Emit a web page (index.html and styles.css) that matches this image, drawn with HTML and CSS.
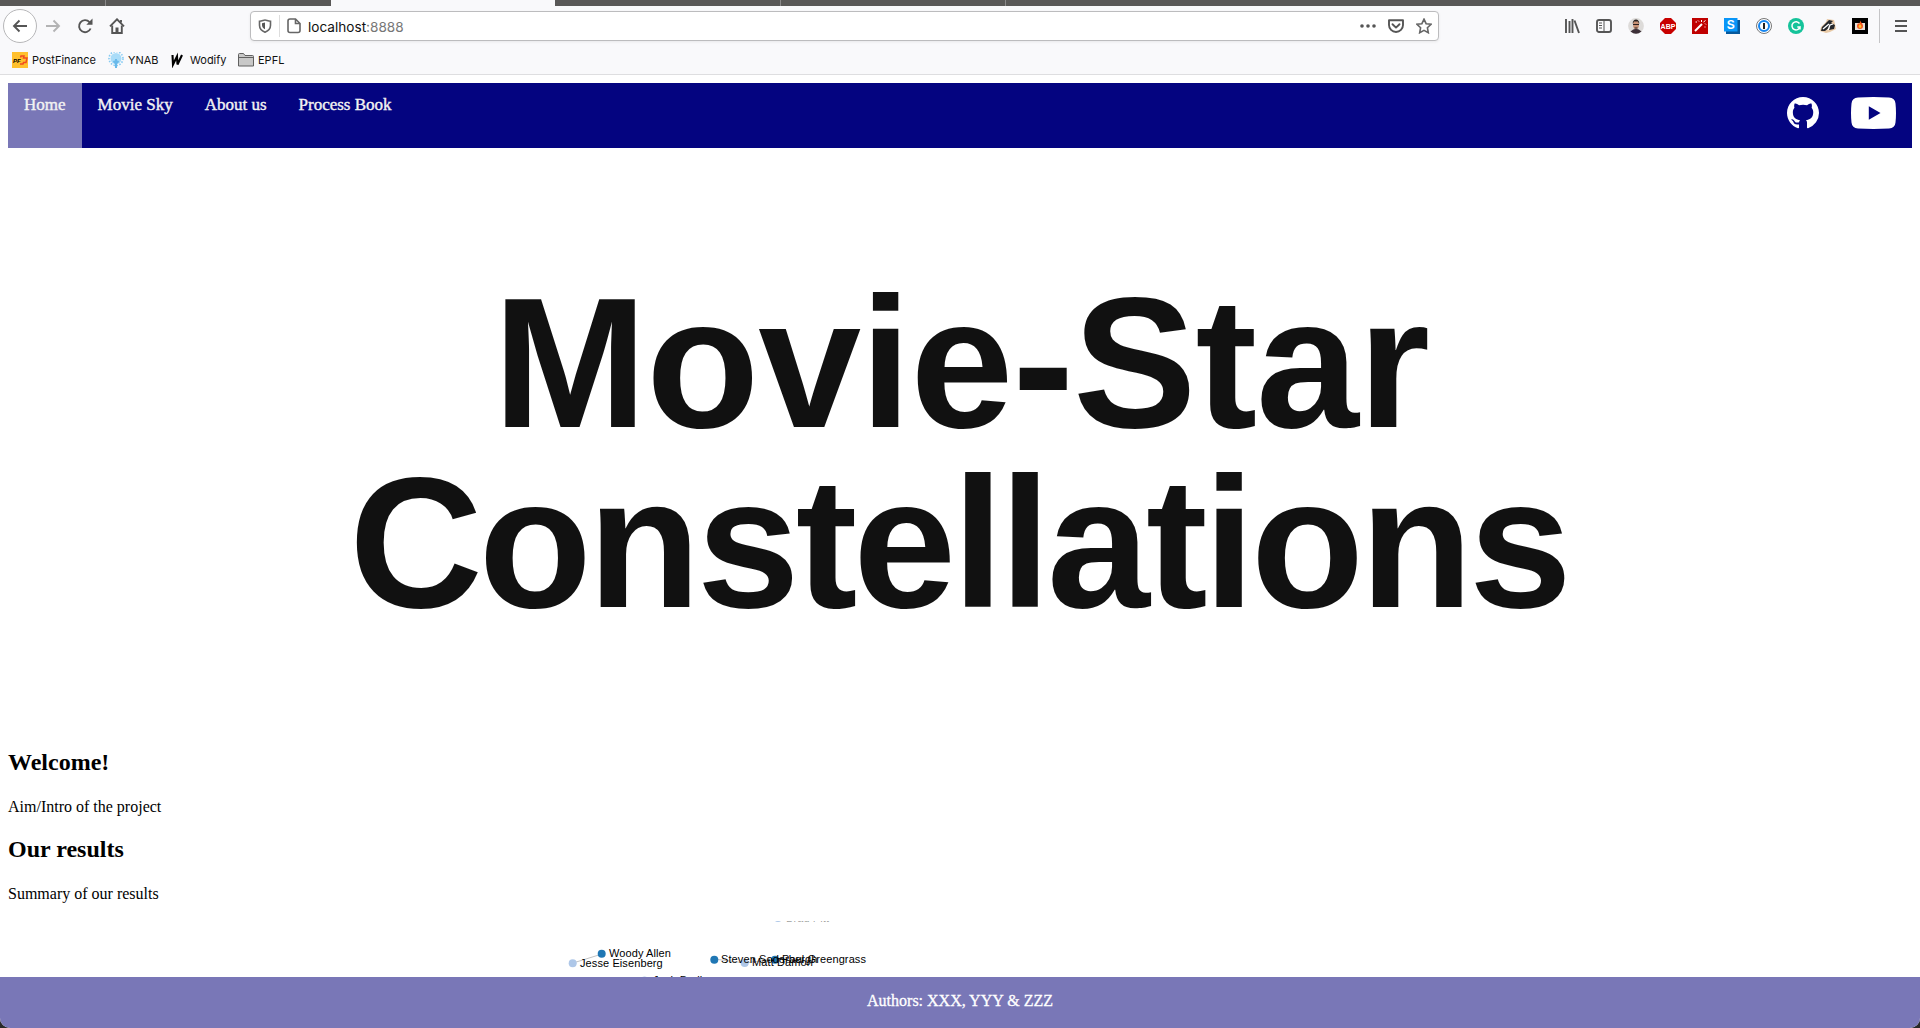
FILE: index.html
```html
<!DOCTYPE html>
<html lang="en">
<head>
<meta charset="utf-8">
<title>Movie-Star Constellations</title>
<link rel="stylesheet" href="styles.css">
</head>
<body>
<div class="window">
  <header class="browser">
    <div class="tabs"><span class="tab tab-a"></span><span class="tab tab-b"></span><span class="tab tab-active"></span><span class="tab tab-c"></span><span class="tab tab-d"></span><span class="tab tab-e"></span></div>
    <div class="toolbar">
      <div class="controls">
        <span class="back"><svg class="i16" viewBox="0 0 16 16"><path d="M15 8H2M7.500 2.500 2 8l5.500 5.500" class="s2"/></svg></span>
        <svg class="i16 dim" viewBox="0 0 16 16"><path d="M1 8h13M8.500 2.500 14 8l-5.500 5.500" class="s2"/></svg>
        <svg class="i16" viewBox="0 0 16 16"><path d="M13.600 10.500A6 6 0 1 1 12.500 4.100" class="s2"/><path d="M15.500.5v6.200H9.300z" class="f"/></svg>
        <svg class="i16" viewBox="0 0 16 16"><path d="M1 8.300 8 1.300l7 7" class="s2"/><path d="M3.200 7.500V15h9.600V7.500M12 4.500V2" class="s2"/><path d="M6.500 9.500h3V15h-3z" class="f"/></svg>
      </div>
      <div class="urlbar">
        <svg class="i14" viewBox="0 0 14 14"><path d="M1.500 2.200C4 2.200 5.500 1 7 1s3 1.200 5.500 1.200v4C12.500 10 10 12 7 13.200 4 12 1.500 10 1.500 6.200z" class="s17"/><path d="M7 3.500v6.800C5 9.200 4 8 4 6V4.200z" class="f"/></svg>
        <i class="split"></i>
        <svg class="doc" viewBox="0 0 14 16"><path d="M3.500 1h5L13 5.500v7a2 2 0 0 1-2 2H3a2 2 0 0 1-2-2V3a2 2 0 0 1 2-2zM8.500 1v4.500H13" class="s17"/></svg>
        <span class="address">localhost<b>:8888</b></span>
        <svg class="i16" viewBox="0 0 16 16"><circle cx="2" cy="8" r="1.800" class="f"/><circle cx="8" cy="8" r="1.800" class="f"/><circle cx="14" cy="8" r="1.800" class="f"/></svg>
        <svg class="i16" viewBox="0 0 16 16"><path d="M1 2.200h14V7a7 7 0 0 1-14 0z" class="s2 r"/><path d="M4.500 6.200 8 9.600l3.500-3.400" class="s2 r"/></svg>
        <svg class="i16" viewBox="0 0 16 16"><path d="m8 1.200 2.100 4.500 4.900.6-3.600 3.400.9 5L8 12.300l-4.300 2.400.9-5L1 6.300l4.900-.6z" class="s17"/></svg>
      </div>
      <div class="extensions">
        <svg class="i16" viewBox="0 0 16 16"><path d="M2 1v14M5.500 3v12M8.500 1v14M10.500 2.500 15 15" class="s2"/></svg>
        <svg class="i16" viewBox="0 0 16 16"><rect x="1" y="2" width="14" height="12" rx="2" class="s2"/><path d="M8 2v12M3 5h3M3 7.500h3M3 10h3" class="s1"/></svg>
        <svg class="i16" viewBox="0 0 16 16"><circle cx="8" cy="8" r="7.900" fill="#dddbd9"/><path d="M2.500 13.500Q8 8 13.500 13.500 8 18 2.500 13.500" fill="#3d3038"/><ellipse cx="8" cy="6.500" rx="3" ry="4.500" fill="#c89276"/><path d="M4.800 6C4 0 12 0 11.200 6L10 3.500H6z" fill="#25201f"/><path d="M5 6.500h6M6.500 10h3" stroke="#2a2020"/></svg>
        <svg class="i16" viewBox="0 0 16 16"><path d="M5 0h6l5 5v6l-5 5H5l-5-5V5z" fill="#c80000"/><text x="8" y="10.800" class="abp">ABP</text></svg>
        <svg class="i16" viewBox="0 0 16 16"><path d="M0 0h16v16H0z" fill="#c00000"/><path d="m3 13 7-7" stroke="#fff" stroke-width="2"/><path d="M9.500 2v2M6 2.500l1 1M13 5.500l1 1M11.500 4l2-1.500M3.500 4h1.500M12.500 9h1" stroke="#fff"/></svg>
        <svg class="i16" viewBox="0 0 16 16"><path d="M2 2h14v14H2z" fill="#07599c"/><path d="M0 0h13.500v13.500H0z" fill="#0996f8"/><text x="6.800" y="11" class="letter">S</text></svg>
        <svg class="i16" viewBox="0 0 16 16"><circle cx="8" cy="8" r="7.500" fill="#fff" stroke="#777"/><circle cx="8" cy="8" r="5" fill="#fff" stroke="#1686f0" stroke-width="2"/><path d="M8 5v6" stroke="#222" stroke-width="2"/></svg>
        <svg class="i16" viewBox="0 0 16 16"><circle cx="8" cy="8" r="8" fill="#15c39a"/><path d="M11.500 5.500A4.100 4.100 0 1 0 12 9H9.300M12 8.500v3" fill="none" stroke="#fff" stroke-width="1.500"/></svg>
        <svg class="i16" viewBox="0 0 16 16"><path d="m0 13 1-4 5-5 1-3 7 1 1 4 1 5-6 3-4 1z" fill="#e8c9a6"/><path d="m1 13 1-4 5-5 2-2 4 1-2 2 4 2-1 4-5 1 1-3-5 4z" fill="#25282c"/><path d="m3 11 6-5M8 12l2-5 3-1" fill="none" stroke="#fff" stroke-width="1.300"/></svg>
        <svg class="i16" viewBox="0 0 16 16"><path d="M0 0h16v16H0z"/><path d="M3 5h10v7H3z" fill="#e4dfd8"/><path d="M8 2c0 2 3 3 3 6a3 3 0 0 1-6 0c0-2 1-2 1-3l1 1c1-1 1-2 1-4" fill="#f6551d"/><path d="M8 6q3 3 0 4-3-1 0-4" fill="#ffc52e"/></svg>
      </div>
      <div class="menu"><svg class="i14" viewBox="0 0 14 14"><path d="M1 2h12M1 7h12M1 12h12" class="s2"/></svg></div>
    </div>
    <div class="bookmarks">
      <span class="bm bm1"><svg class="i16" viewBox="0 0 16 16"><path d="M0 0h16v16H0z" fill="#ffc02e"/><path d="M8.500 5.500 9 4h3l-.5 2H15l-1 4.500h-2.500L11 12H8" fill="none" stroke="#f04b22" stroke-width="1.500"/><text x="1" y="10.500" class="pf">PF</text></svg>PostFinance</span>
      <span class="bm bm2"><svg class="i16" viewBox="0 0 16 16"><circle cx="8" cy="6.500" r="5.500" fill="#a9dcf8"/><circle cx="8" cy="6.500" r="7" fill="none" stroke="#85caf2" stroke-width="1.600" stroke-dasharray="1.500 1.500"/><path d="M8 7v9M5.500 9 8 11.500 10.500 9" fill="none" stroke="#68b9ea" stroke-width="2"/></svg>YNAB</span>
      <span class="bm bm3"><svg class="i16" viewBox="0 0 16 16"><path d="m2.500 3 .5 9.500L7 4.500l.5 8L12 3" fill="none" stroke="#000" stroke-width="2.100"/></svg>Wodify</span>
      <span class="bm bm4"><svg class="i16" viewBox="0 0 16 16"><path d="M.5 14V2.500q0-1 1-1h4l1.500 2h7.500q1 0 1 1V14z" fill="#c8c8c8" stroke="#606060"/><path d="M1 5.500h14" stroke="#606060"/></svg>EPFL</span>
    </div>
  </header>
  <main class="page">
    <nav class="nav">
      <a class="link active">Home</a><a class="link">Movie Sky</a><a class="link">About us</a><a class="link">Process Book</a>
      <div class="social">
        <svg class="github" viewBox="0 0 16 16"><path fill="#fff" d="M8 0C3.580 0 0 3.580 0 8c0 3.540 2.290 6.530 5.470 7.590.4.070.55-.17.55-.38 0-.19-.01-.82-.01-1.490-2.010.37-2.530-.49-2.690-.94-.09-.23-.48-.94-.82-1.130-.28-.15-.68-.52-.01-.53.63-.01 1.080.58 1.230.82.72 1.210 1.870.87 2.330.66.07-.52.28-.87.51-1.070-1.780-.2-3.640-.89-3.640-3.950 0-.87.31-1.590.82-2.150-.08-.2-.36-1.020.08-2.120 0 0 .67-.21 2.200.82.64-.18 1.320-.27 2-.27s1.360.09 2 .27c1.530-1.040 2.200-.82 2.200-.82.44 1.100.16 1.920.08 2.120.51.56.82 1.270.82 2.150 0 3.070-1.870 3.750-3.650 3.950.29.25.54.73.54 1.480 0 1.070-.01 1.930-.01 2.200 0 .21.15.46.55.38A8.010 8.010 0 0 0 16 8c0-4.420-3.580-8-8-8z"/></svg>
        <svg class="youtube" viewBox="0 0 45 32"><path fill="#fff" fill-rule="evenodd" d="M7 .4Q22.500-.4 38 .4q6 .4 6.500 6 1 9.600 0 19.200-.5 5.600-6.500 6-15.500.8-31 0-6-.4-6.500-6-1-9.600 0-19.200.5-5.600 6.500-6zM17.800 9.300v13.400L29.500 16z"/></svg>
      </div>
    </nav>
    <h1 class="title"><span class="line first">Movie-Star</span><span class="line second">Constellations</span></h1>
    <h2>Welcome!</h2>
    <p>Aim/Intro of the project</p>
    <h2>Our results</h2>
    <p class="summary">Summary of our results</p>
    <svg class="graph" viewBox="0 0 960 300">
      <path d="m565 42 29-9M706 38l31 4 30-4" stroke="#999" stroke-opacity=".6" fill="none"/>
      <g fill="#aec7e8"><circle cx="564.700" cy="42.300" r="4"/><circle cx="736.700" cy="42" r="4"/><circle cx="770" cy="-3" r="4"/><circle cx="636.500" cy="59.500" r="4"/></g>
      <g fill="#1f77b4"><circle cx="593.700" cy="32.700" r="4"/><circle cx="706.300" cy="38.700" r="4"/><circle cx="767" cy="38.700" r="4"/></g>
      <g class="names"><text x="601" y="36">Woody Allen</text><text x="572" y="46">Jesse Eisenberg</text><text x="713" y="42">Steven Soderbergh</text><text x="744" y="45">Matt Damon</text><text x="774" y="42">Paul Greengrass</text><text x="645" y="63">Josh Brolin</text><text x="778" y="1" fill-opacity=".4">Brad Pitt</text></g>
    </svg>
  </main>
  <footer class="footer">Authors: XXX, YYY &amp; ZZZ</footer>
</div>
</body>
</html>
```
FILE: styles.css
```css
* { box-sizing: border-box; }
body { margin: 0; background: #292929; overflow: hidden; }
.window { height: 1028px; display: flex; flex-direction: column; overflow: hidden; background: #fff; border-radius: 0 0 10px 10px; font-family: "Liberation Serif", "Times New Roman", serif; font-size: 16px; color: #000; }
svg { display: block; flex: none; }
.i16 { width: 16px; height: 16px; }
.i14 { width: 14px; height: 14px; }
.doc { width: 14px; height: 16px; }
.s1, .s17, .s2 { fill: none; stroke: #555; stroke-width: 1; }
.s17 { stroke-width: 1.6; stroke: #666; }
.s2 { stroke-width: 1.9; }
.r { stroke-linecap: round; stroke-linejoin: round; }
.f { fill: #555; }
.dim { opacity: .42; }
.browser { flex: none; height: 75px; background: #f9f9fb; border-bottom: 1px solid #dedee0; font-family: Inter, "Liberation Sans", sans-serif; }
.tabs { height: 6px; display: flex; }
.tab { background: #595857; border-right: 1px solid #8a8989; }
.tab-a { width: 106px; }
.tab-b { width: 225px; border: 0; }
.tab-active { width: 224px; background: #f9f9fb; border: 0; }
.tab-c { width: 226px; }
.tab-d { width: 225px; }
.tab-e { flex: 1; border: 0; }
.toolbar { height: 40px; display: flex; align-items: center; }
.controls { width: 250px; padding-left: 3px; display: flex; align-items: center; gap: 16px; }
.back { width: 34px; height: 34px; margin-right: -8px; border: 1px solid #b7b7b9; border-radius: 50%; background: #fff; display: flex; align-items: center; justify-content: center; }
.urlbar { width: 1189px; height: 30px; padding: 0 6px 0 7px; border: 1px solid #bcbcbe; border-radius: 4px; background: #fff; display: flex; align-items: center; gap: 12px; box-shadow: 0 1px 3px #0001; }
.split { width: 1px; height: 22px; background: #ddd; margin-left: -5px; margin-right: -5px; }
.address { flex: 1; font-size: 13.600px; line-height: 16px; padding-top: 2px; margin-left: -5px; color: #111; }
.address b { font-weight: 400; color: #777; }
.extensions { margin-left: 125px; display: flex; gap: 16px; }
.abp { font: bold 7px "Liberation Sans", sans-serif; fill: #fff; text-anchor: middle; }
.letter { font: bold 12px "Liberation Sans", sans-serif; fill: #fff; text-anchor: middle; }
.pf { font: italic bold 6px "Liberation Sans", sans-serif; }
.menu { height: 34px; margin-left: 11px; padding-left: 14px; border-left: 1px solid #c5c5c7; display: flex; align-items: center; }
.bookmarks { height: 28px; padding-left: 12px; display: flex; align-items: center; font-size: 11px; color: #111; }
.bm { display: flex; align-items: center; gap: 4px; white-space: nowrap; }
.bm1 { width: 96px; }
.bm2 { width: 62px; }
.bm3 { width: 68px; }
.page { flex: 1; min-height: 0; padding: 8px 8px 0; overflow: hidden; }
.nav { height: 65px; display: flex; background: #040480; }
.link { padding: 12px 16px; font-size: 17px; line-height: 20px; color: #f2f2f2; -webkit-text-stroke: .4px #f2f2f2; }
.active { background: #7977b7; }
.social { margin-left: auto; padding: 14px 16px; display: flex; gap: 32px; }
.github { width: 32px; height: 32px; }
.youtube { width: 45px; height: 32px; }
.title { margin: 125px 0 115px; font: bold 185px/180px "Liberation Sans", Arial, sans-serif; text-align: center; color: #111; }
.line { display: block; }
.first { letter-spacing: -1px; padding-left: 2px; }
.second { letter-spacing: -4px; padding-right: 3px; }
h2 { margin: 20px 0; font-size: 24px; line-height: 28px; }
p { margin: 21px 0 19px; line-height: 19px; }
.summary { margin-bottom: 18px; }
h2 + p { margin-top: 21px; }
h2 { margin-bottom: 21px; }
p + h2 { margin-top: 19px; }
.graph { width: 960px; height: 300px; overflow: hidden; }
.names { font: 11px "Liberation Sans", Arial, sans-serif; letter-spacing: .1px; }
.footer { flex: none; height: 51px; padding-top: 14px; background: #7977b7; color: #fff; text-align: center; line-height: 20px; -webkit-text-stroke: .3px #fff; }
```
